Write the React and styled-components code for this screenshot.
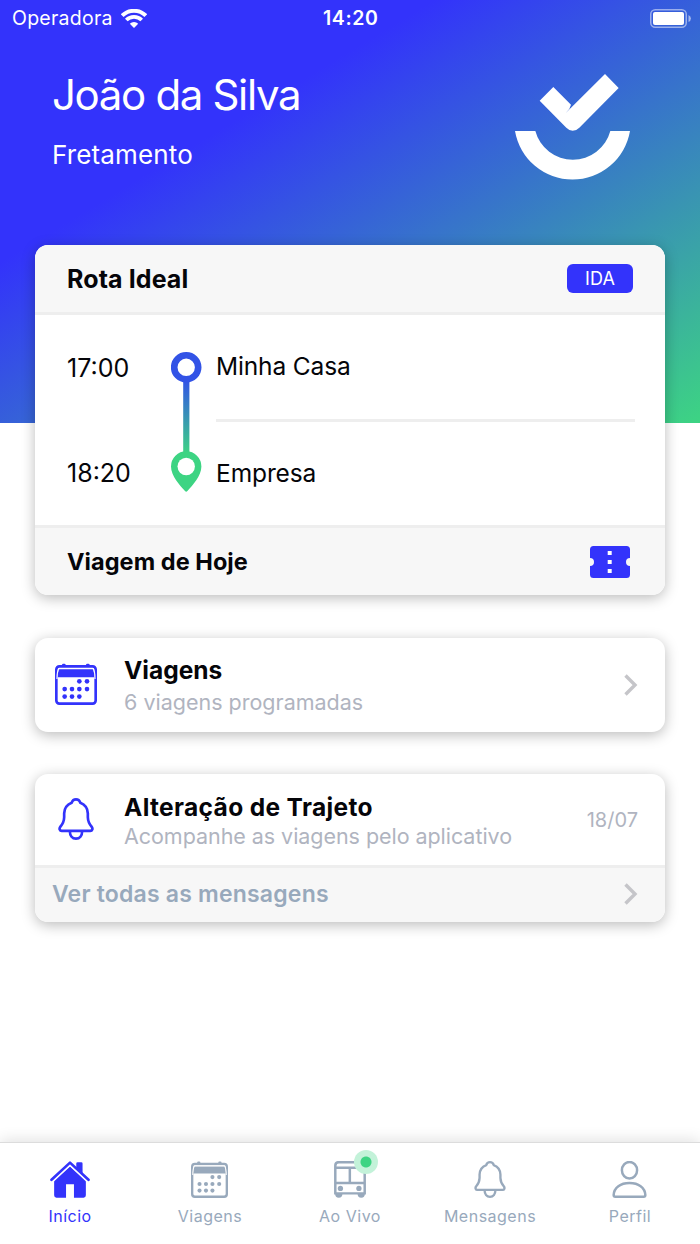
import React from 'react'
import styled, { createGlobalStyle, ThemeProvider } from 'styled-components'

const theme = {
  blue: '#3333fb',
  green: '#3dd483',
  slate: '#98a9bc',
  muted: '#b0b4c0',
  line: '#eeeeee',
  panel: '#f7f7f7'
}

const GlobalStyle = createGlobalStyle`
  * {
    box-sizing: border-box;
  }

  body {
    margin: 0;
    background: #fff;
    font-family: Inter, 'Liberation Sans', sans-serif;
    color: #050509;
  }

  svg {
    display: block;
    flex: none;
  }
`

const Screen = styled.div`
  width: 700px;
  height: 1244px;
  display: flex;
  flex-direction: column;
  overflow: hidden;
`

const Hero = styled.header`
  flex: none;
  height: 422.5px;
  background: linear-gradient(to bottom right, ${p => p.theme.blue} 31%, ${p => p.theme.green} 100%);
  color: #fff;
`

const StatusBar = styled.div`
  height: 36px;
  padding: 0 9px 0 12px;
  display: grid;
  grid-template-columns: 311px auto 1fr;
  align-items: center;
`

const Carrier = styled.div`
  display: flex;
  align-items: center;
  gap: 8px;
`

const BatterySlot = styled.div`
  display: flex;
  justify-content: flex-end;
`

const Text = styled.span`
  display: block;
  white-space: nowrap;
  font-size: ${p => p.size}px;
  line-height: ${p => p.lh || 30}px;
  font-weight: ${p => p.weight || 400};
  letter-spacing: ${p => p.track || 0}px;
  color: ${p => p.theme[p.tone] || 'inherit'};
`

const Greeting = styled.div`
  padding: 35px 70.5px 0 52px;
  display: flex;
  justify-content: space-between;
`

const Names = styled.div`
  display: flex;
  flex-direction: column;
  gap: 20px;
`

const LogoSlot = styled.div`
  padding-top: 3px;
`

const Content = styled.main`
  flex: 1;
  margin-top: -177.5px;
  padding: 0 35px;
  display: flex;
  flex-direction: column;
`

const Card = styled.section`
  border-radius: 13px;
  background: #fff;
  overflow: hidden;
  box-shadow: 0 3px 14px rgba(0, 0, 0, 0.27);
  margin-bottom: ${p => p.gap}px;
`

const CardHead = styled.div`
  height: 70px;
  padding: 0 32px 0 32px;
  display: flex;
  align-items: center;
  justify-content: space-between;
  background: ${p => p.theme.panel};
  border-bottom: 3px solid ${p => p.theme.line};
`

const CardFoot = styled.div`
  height: ${p => p.h}px;
  padding: ${p => p.pad};
  display: flex;
  align-items: center;
  justify-content: space-between;
  background: ${p => p.theme.panel};
  border-top: 3px solid ${p => p.theme.line};
`

const Badge = styled.div`
  width: 66px;
  height: 29px;
  border-radius: 6px;
  background: ${p => p.theme.blue};
  color: #fff;
  text-align: center;
`

const Route = styled.div`
  height: 210px;
  padding: 37px 30px 0 32px;
  display: grid;
  grid-template-columns: 104px 31px 1fr;
`

const Times = styled.div`
  padding-top: 1px;
  display: flex;
  flex-direction: column;
  gap: 75px;
`

const Stops = styled.div`
  margin: -1px 0 0 14px;
`

const Divider = styled.div`
  height: 3px;
  margin: 38px 0 36px;
  background: ${p => p.theme.line};
`

const Row = styled.div`
  height: ${p => p.h}px;
  padding: 0 27px 0 19px;
  display: flex;
  align-items: center;
`

const RowIcon = styled.div`
  width: 70px;
  padding: 0 0 2px ${p => p.inset || 0}px;
  color: ${p => p.theme.blue};
`

const RowText = styled.div`
  flex: 1;
  padding-top: ${p => p.drop}px;
  display: flex;
  flex-direction: column;
  gap: ${p => p.gap}px;
`

const DateText = styled.div`
  padding-top: 1px;
`

const TabBar = styled.nav`
  flex: none;
  height: 102px;
  display: grid;
  grid-template-columns: repeat(5, 1fr);
  background: #fff;
  border-top: 1px solid #dcdcdc;
  box-shadow: 0 -2px 14px rgba(0, 0, 0, 0.12);
`

const Tab = styled.div`
  padding-top: 18px;
  display: flex;
  flex-direction: column;
  align-items: center;
  gap: 3px;
  color: ${p => (p.active ? p.theme.blue : p.theme.slate)};
`

const TabIcon = styled.div`
  position: relative;
  margin-right: 1px;
`

const LiveDot = styled.div`
  position: absolute;
  top: -11px;
  right: -12px;
  width: 24px;
  height: 24px;
  border-radius: 50%;
  background: radial-gradient(circle, ${p => p.theme.green} 5px, #c3f2d9 6px);
`

const Wifi = () => (
  <svg width="26" height="19" viewBox="0 0 26 19" fill="none" stroke="#fff">
    <path d="M1.2 6.6a16.8 16.8 0 0 1 23.6 0" strokeWidth="3.9" />
    <path d="M5.3 11a10.9 10.9 0 0 1 15.4 0" strokeWidth="3.7" />
    <path d="M8.8 14.8a6 6 0 0 1 8.4 0L13 19z" fill="#fff" stroke="none" />
  </svg>
)

const Battery = () => (
  <svg width="41" height="19" viewBox="0 0 41 19">
    <rect x="0.75" y="0.75" width="35.5" height="17.5" rx="4.5" fill="none" stroke="#fff" strokeOpacity="0.5" strokeWidth="1.5" />
    <rect x="3" y="3" width="31" height="13" rx="2" fill="#fff" />
    <path d="M38.5 6v7q2.4-1 2.4-3.5T38.5 6z" fill="#fff" fillOpacity="0.55" />
  </svg>
)

const Logo = () => (
  <svg width="115" height="106" viewBox="493 222 345 318" fill="#fff">
    <path d="M608 261L567 302L647 383Q666 402 686 383L804 264L763 222L646 338Q658 328 661 314Z" />
    <path d="M493 393A175 175 0 0 0 838 393H779A116.5 116.5 0 0 1 554 393Z" />
  </svg>
)

const RouteLine = () => (
  <svg width="31" height="140" viewBox="0 0 31 140">
    <defs>
      <linearGradient id="leg" x1="0" y1="0" x2="0" y2="1">
        <stop offset="0" stopColor="#3253e6" />
        <stop offset="1" stopColor="#3dd483" />
      </linearGradient>
    </defs>
    <rect x="12.2" y="28" width="6.2" height="74" fill="url(#leg)" />
    <circle cx="15.2" cy="15.3" r="12" fill="#fff" stroke="#3253e6" strokeWidth="6.6" />
    <path
      d="M15.2 99.3A15.2 15.2 0 0 0 0 114.5C0 124 9 133.5 14 139Q15.2 140.4 16.4 139C21.4 133.5 30.4 124 30.4 114.5A15.2 15.2 0 0 0 15.2 99.3Z"
      fill="#3dd483"
    />
    <circle cx="15.2" cy="114.5" r="8.7" fill="#fff" />
  </svg>
)

const Ticket = () => (
  <svg width="40" height="32" viewBox="0 0 40 32">
    <path
      d="M3.5 0h33Q40 0 40 3.5V12a4 4 0 0 0 0 8v8.5Q40 32 36.5 32h-33Q0 32 0 28.5V20a4 4 0 0 0 0-8V3.5Q0 0 3.5 0z"
      fill="#3333fb"
    />
    <path d="M17.7 5h4v4h-4zM17.7 14h4v4h-4zM17.7 23h4v4h-4z" fill="#fff" />
  </svg>
)

const Calendar = ({ width, height }) => (
  <svg width={width} height={height} viewBox="0 0 126 124" fill="currentColor" preserveAspectRatio="none">
    <rect x="4" y="10" width="118" height="110" rx="9" fill="none" stroke="currentColor" strokeWidth="8" />
    <rect x="21" y="2" width="11" height="8" rx="4" />
    <rect x="93" y="2" width="11" height="8" rx="4" />
    <path d="M11 18h104l4 24H7z" />
    <path d="M12 16.5h102" stroke="#fff" strokeWidth="3.5" />
    <path d="M12 16Q6 24 6 47M114 16Q120 24 120 47" fill="none" stroke="#fff" strokeWidth="3.5" />
    <circle cx="73" cy="54" r="7" />
    <circle cx="96" cy="54" r="7" />
    {[29, 51, 73, 96].map(x => (
      <circle key={x} cx={x} cy="77" r="7" />
    ))}
    {[29, 51, 73].map(x => (
      <circle key={x} cx={x} cy="99" r="7" />
    ))}
  </svg>
)

const Bell = ({ width, height }) => (
  <svg width={width} height={height} viewBox="0 0 106 126" fill="none" stroke="currentColor" strokeWidth="8">
    <path d="M53 4C60 4 64 8 66 14C81 20 88 31 88.5 46V58C89 74 94 80 100.5 87C104 92 102 98.5 96 98.5H10C4 98.5 2 92 5.5 87C12 80 17 74 17.5 58V46C18 31 25 20 40 14C42 8 46 4 53 4Z" />
    <path d="M34.5 99C34.5 113 42 122 53 122S71.5 113 71.5 99" />
  </svg>
)

const Home = () => (
  <svg width="40" height="37" viewBox="0 0 120 112" fill="currentColor">
    <path d="M79 8q0-4 4-4h11q4 0 4 4v34L79 24z" />
    <path d="M12 59L60 16L108 59V104q0 7-7 7H72V70H48V111H19q-7 0-7-7z" />
    <path d="M8 62L60 13L112 62" fill="none" stroke="#fff" strokeWidth="5" />
    <path d="M4 57L60 5L116 57" fill="none" stroke="currentColor" strokeWidth="8" strokeLinecap="round" strokeLinejoin="round" />
  </svg>
)

const Bus = () => (
  <svg width="32" height="37" viewBox="0 0 96 112" fill="none" stroke="currentColor" strokeWidth="7.5">
    <path d="M70 3.5H14Q3.5 3.5 3.5 14V98H92.5V30M3.5 20.5H76M47.5 20V66M3.5 66.5H92.5" />
    <circle cx="19" cy="83" r="8" fill="currentColor" stroke="none" />
    <circle cx="75" cy="83" r="8" fill="currentColor" stroke="none" />
    <path d="M3 100h22q0 11-11 11T3 100zM71 100h22q0 11-11 11T71 100z" fill="currentColor" stroke="none" />
  </svg>
)

const Person = () => (
  <svg width="35" height="37" viewBox="0 0 104 112" fill="none" stroke="currentColor" strokeWidth="7.5">
    <ellipse cx="52" cy="28" rx="23" ry="25" />
    <path d="M4 103C5 80 25 66.5 52 66.5S99 80 100 103q0 5-5 5H9q-5 0-5-5z" />
  </svg>
)

const Chevron = () => (
  <svg width="14" height="22" viewBox="0 0 14 22" fill="none" stroke="#c5c5c9" strokeWidth="3.4">
    <path d="M1.5 1.5L11 11L1.5 20.5" />
  </svg>
)

const tabs = [
  { label: 'Início', icon: <Home />, active: true },
  { label: 'Viagens', icon: <Calendar width={37} height={37} /> },
  { label: 'Ao Vivo', icon: <Bus />, live: true },
  { label: 'Mensagens', icon: <Bell width={32} height={37} /> },
  { label: 'Perfil', icon: <Person /> }
]

const App = () => (
  <ThemeProvider theme={theme}>
    <GlobalStyle />
    <Screen>
      <Hero>
        <StatusBar>
          <Carrier>
            <Text size={19.5} track={0.25}>
              Operadora
            </Text>
            <Wifi />
          </Carrier>
          <Text size={19.5} weight={600} track={0.6}>
            14:20
          </Text>
          <BatterySlot>
            <Battery />
          </BatterySlot>
        </StatusBar>
        <Greeting>
          <Names>
            <Text size={42} lh={48} weight={400} track={-1.35}>
              João da Silva
            </Text>
            <Text size={26} lh={32} track={0.15}>
              Fretamento
            </Text>
          </Names>
          <LogoSlot>
            <Logo />
          </LogoSlot>
        </Greeting>
      </Hero>

      <Content>
        <Card gap={43}>
          <CardHead>
            <Text size={25} weight={700} track={0.1}>
              Rota Ideal
            </Text>
            <Badge>
              <Text size={18} lh={30} track={0.2}>
                IDA
              </Text>
            </Badge>
          </CardHead>
          <Route>
            <Times>
              <Text size={25}>17:00</Text>
              <Text size={25}>18:20</Text>
            </Times>
            <RouteLine />
            <Stops>
              <Text size={24.5} track={-0.15}>
                Minha Casa
              </Text>
              <Divider />
              <Text size={24.5} track={-0.1}>
                Empresa
              </Text>
            </Stops>
          </Route>
          <CardFoot h={70} pad="0 35px 0 32px">
            <Text size={23.5} weight={700} track={0.05}>
              Viagem de Hoje
            </Text>
            <Ticket />
          </CardFoot>
        </Card>

        <Card gap={42}>
          <Row h={94}>
            <RowIcon inset={0.5}>
              <Calendar width={42} height={42} />
            </RowIcon>
            <RowText gap={2} drop={2}>
              <Text size={24.5} weight={700}>
                Viagens
              </Text>
              <Text size={21.5} tone="muted">
                6 viagens programadas
              </Text>
            </RowText>
            <Chevron />
          </Row>
        </Card>

        <Card>
          <Row h={91}>
            <RowIcon inset={4}>
              <Bell width={36} height={42} />
            </RowIcon>
            <RowText gap={0} drop={4}>
              <Text size={24.5} lh={29} weight={700} track={0.35}>
                Alteração de Trajeto
              </Text>
              <Text size={21.5} lh={29} tone="muted" track={-0.05}>
                Acompanhe as viagens pelo aplicativo
              </Text>
            </RowText>
            <DateText>
              <Text size={20} tone="muted">
                18/07
              </Text>
            </DateText>
          </Row>
          <CardFoot h={57} pad="0 27px 2px 17px">
            <Text size={23} weight={600} tone="slate" track={0.2}>
              Ver todas as mensagens
            </Text>
            <Chevron />
          </CardFoot>
        </Card>
      </Content>

      <TabBar>
        {tabs.map(tab => (
          <Tab key={tab.label} active={tab.active}>
            <TabIcon>
              {tab.icon}
              {tab.live && <LiveDot />}
            </TabIcon>
            <Text size={16} track={0.5}>
              {tab.label}
            </Text>
          </Tab>
        ))}
      </TabBar>
    </Screen>
  </ThemeProvider>
)

export default App
